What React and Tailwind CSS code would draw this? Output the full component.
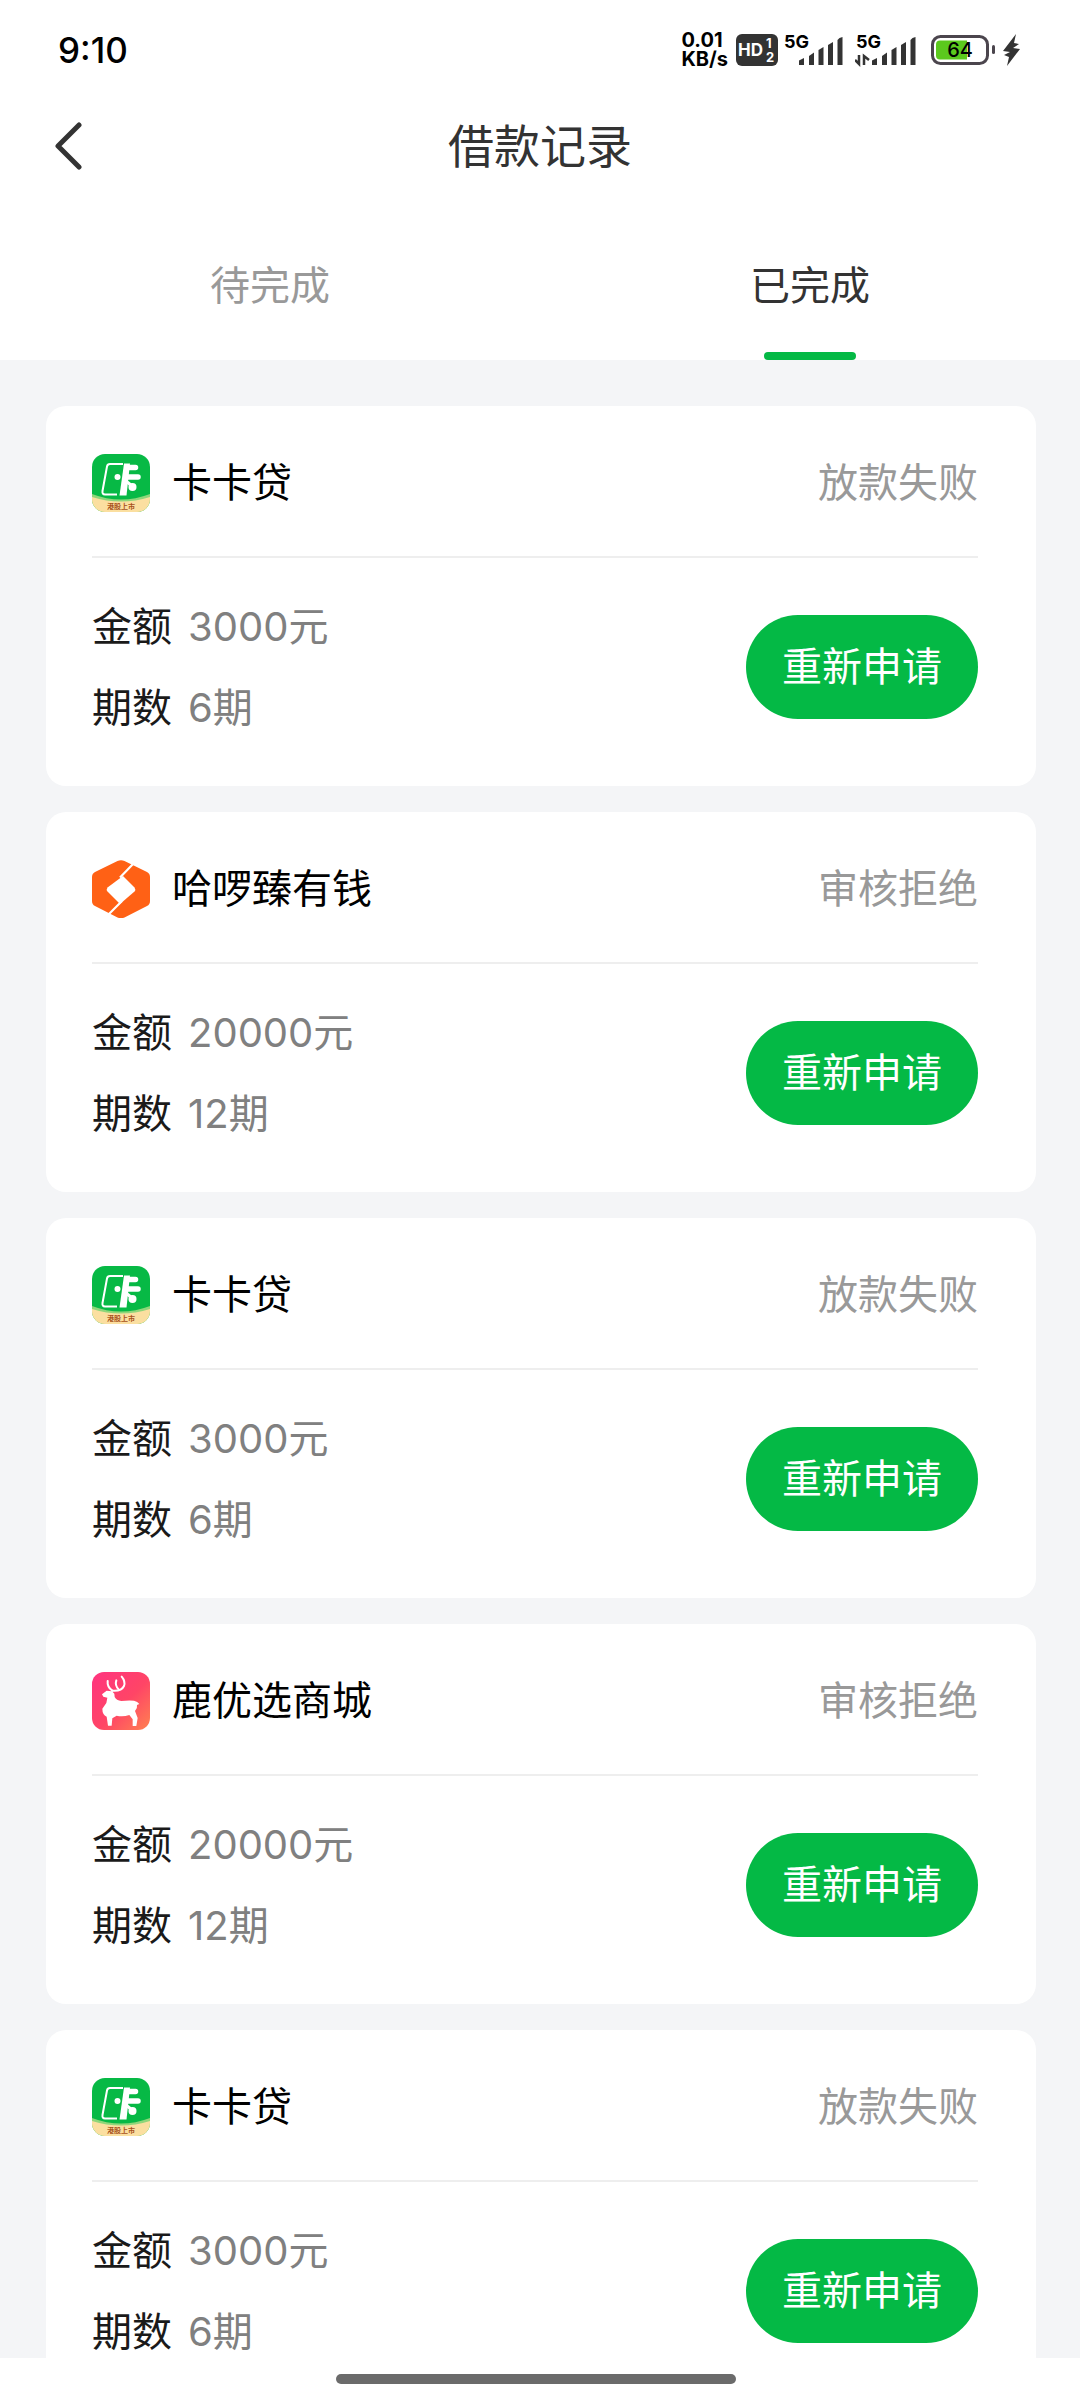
import React, { useState } from 'react';

const KakaLogo = () => (
    <svg viewBox="0 0 58 58" className="size-[58px] shrink-0" aria-hidden="true">
        <defs>
            <clipPath id="kaka-clip">
                <rect width="58" height="58" rx="13" />
            </clipPath>
        </defs>
        <g clipPath="url(#kaka-clip)">
            <rect width="58" height="58" fill="#07b945" />
            <path d="M0 40Q29 51 58 40V58H0Z" fill="#8fd67a" />
            <path d="M0 43Q29 52 58 43V58H0Z" fill="#fbdfa0" />
            <path d="M31 10H18Q15.500 10 15 12.500L10.500 37Q10 40.500 13 40.500H25" fill="none" stroke="#fff" strokeWidth="2" />
            <path d="M32 9.500H38L34.500 41.500H27.500Z" fill="#fff" />
            <path d="M36 13.500H43.500M35 23H46" stroke="#fff" strokeWidth="5.500" strokeLinecap="round" />
            <path d="M34 27L40 32" stroke="#fff" strokeWidth="3" />
            <circle cx="40.500" cy="33" r="4" fill="#fff" />
            <circle cx="25.500" cy="23" r="3" fill="#fff" />
            <text x="29" y="55" textAnchor="middle" fontSize="7" fontWeight="700" fill="#a8521a">港股上市</text>
        </g>
    </svg>
);

const HelloLogo = () => (
    <svg viewBox="0 0 58 58" className="size-[58px] shrink-0" aria-hidden="true">
        <path d="M25.500 1Q29 -.5 32.500 1L55 12Q58 13.500 58 17V41Q58 44.500 55 46L32.500 57.500Q29 59 25.500 57.500L3 46Q0 44.500 0 41V17Q0 13.500 3 12Z" fill="#ff6115" />
        <path d="M31 16L42.500 27.500Q44 29.500 42.500 31.500L28 44L15.500 31.500Q14 29.500 15.500 27.500Z" fill="#fff" />
        <path d="M42 3L28 17.500M30 41L16.500 54.500" stroke="#fff" strokeWidth="2.200" />
    </svg>
);

const DeerLogo = () => (
    <svg viewBox="0 0 174 174" className="size-[58px] shrink-0" aria-hidden="true">
        <defs>
            <linearGradient id="deer-bg" x1="0" y1="0" x2="1" y2="1">
                <stop offset="0" stopColor="#ff3480" />
                <stop offset=".55" stopColor="#ff4566" />
                <stop offset="1" stopColor="#ff8250" />
            </linearGradient>
        </defs>
        <rect width="174" height="174" rx="36" fill="url(#deer-bg)" />
        <path d="M30 67L44 56L60 58L67 65L68 75Q73 86 88 87Q110 84 126 86Q137 88 142 96L135 99Q137 109 129 117L137 138L133 162H122L122 142L112 129Q92 136 74 131L61 139L59 161H48L44 134Q31 128 31 110L43 93L46 77L34 74Z" fill="#fff" />
        <g fill="none" stroke="#fff" strokeWidth="6" strokeLinecap="round">
            <path d="M60 56Q88 59 96 42Q101 28 89 14" />
            <path d="M61 56Q45 45 47 27" />
            <path d="M80 52Q68 40 73 25" />
        </g>
    </svg>
);

const SignalBars = () => (
    <g fill="#333">
        <path d="M0 28V23.500L5 21V28Z" />
        <path d="M10 28V19L15 15.500V28Z" />
        <path d="M19.500 28V13L24.500 10V28Z" />
        <path d="M29 28V8L34 5V28Z" />
        <path d="M38.500 28V3Q40 .5 43.500 0V28Z" />
    </g>
);

const StatusBar = () => (
    <div className="flex h-[100px] items-center justify-between pr-[60px] pl-[58px] text-black">
        <span className="text-[35px] leading-none font-medium">9:10</span>
        <div className="flex items-center">
            <div className="mr-2 text-[20px] leading-[19px] font-bold">
                <div>0.01</div>
                <div>KB/s</div>
            </div>
            <svg width="42" height="32" viewBox="0 0 42 32" className="mr-1.5" fontWeight="700" fill="#fff">
                <rect width="42" height="32" rx="6" fill="#333" />
                <text x="2" y="22" fontSize="17">HD</text>
                <text x="30" y="14" fontSize="13">1</text>
                <text x="30" y="28" fontSize="13">2</text>
            </svg>
            <svg width="59" height="44" viewBox="0 -6 59 44" className="mr-3">
                <text x="0" y="14" fontSize="18" fontWeight="700">5G</text>
                <g transform="translate(15 3)"><SignalBars /></g>
            </svg>
            <svg width="61" height="44" viewBox="0 -6 61 44" className="mr-[15px]">
                <text x="1" y="14" fontSize="18" fontWeight="700">5G</text>
                <path d="M4 21V30L0 26M9 31V22L14 26" fill="none" stroke="#333" strokeWidth="2.500" />
                <g transform="translate(17 3)"><SignalBars /></g>
            </svg>
            <svg width="65" height="30" viewBox="0 0 65 30" className="mr-[7px]">
                <rect x="1.500" y="1.500" width="55" height="27" rx="8" fill="#fff" stroke="#4b454d" strokeWidth="3" />
                <path d="M9 5.500H36V24.500H9Q5 24.500 5 20.500V9.500Q5 5.500 9 5.500Z" fill="#5bc91d" />
                <text x="29" y="22" textAnchor="middle" fontSize="20" fontWeight="500">64</text>
                <rect x="61" y="10" width="3" height="9" rx="1.500" fill="#4b454d" />
            </svg>
            <svg width="17" height="32" viewBox="0 0 17 32" fill="#333">
                <path d="M13 0L0 17L7 18L1 21L6 23L4 32L17 15L10 14L16 10L11 9Z" />
            </svg>
        </div>
    </div>
);

const products = {
    kaka: { name: '卡卡贷', Logo: KakaLogo },
    hello: { name: '哈啰臻有钱', Logo: HelloLogo },
    deer: { name: '鹿优选商城', Logo: DeerLogo },
};

const records = [
    { id: 1, product: 'kaka', status: '放款失败', amount: 3000, periods: 6 },
    { id: 2, product: 'hello', status: '审核拒绝', amount: 20000, periods: 12 },
    { id: 3, product: 'kaka', status: '放款失败', amount: 3000, periods: 6 },
    { id: 4, product: 'deer', status: '审核拒绝', amount: 20000, periods: 12 },
    { id: 5, product: 'kaka', status: '放款失败', amount: 3000, periods: 6 },
];

const RecordCard = ({ record }) => {
    const { name, Logo } = products[record.product];

    return (
        <li className="shrink-0 rounded-[20px] bg-white pr-[58px] pl-[46px]">
            <div className="flex h-[152px] items-center border-b-2 border-[#eeeeee] pt-1">
                <Logo />
                <h2 className="ml-[22px] flex-1 text-[40px] leading-[56px] text-black">{name}</h2>
                <span className="text-[40px] leading-[56px] text-[#999999]">{record.status}</span>
            </div>
            <div className="flex items-center justify-between pt-7 pb-[38px]">
                <dl className="text-[40px] leading-[81px]">
                    <div className="flex gap-4">
                        <dt className="text-[#1a1a1a]">金额</dt>
                        <dd className="text-[#808080]">{record.amount}元</dd>
                    </div>
                    <div className="flex gap-4">
                        <dt className="text-[#1a1a1a]">期数</dt>
                        <dd className="text-[#808080]">{record.periods}期</dd>
                    </div>
                </dl>
                <button type="button" className="h-[104px] rounded-full bg-[#04b945] px-9 text-[40px] leading-[56px] text-white">
                    重新申请
                </button>
            </div>
        </li>
    );
};

const tabs = [
    { key: 'pending', label: '待完成' },
    { key: 'done', label: '已完成' },
];

const App = () => {
    const [activeTab, setActiveTab] = useState('done');

    return (
        <div className="flex h-screen flex-col bg-white font-['Inter','Noto_Sans_CJK_SC',sans-serif]">
            <StatusBar />

            {/* Title bar */}
            <header className="grid h-[92px] grid-cols-[1fr_auto_1fr] items-center px-[54px]">
                <button type="button" aria-label="返回" className="justify-self-start">
                    <svg width="28" height="48" viewBox="0 0 28 48" fill="none" stroke="#333" strokeWidth="5" strokeLinecap="round" strokeLinejoin="round">
                        <path d="M25 3L4 24L25 45" />
                    </svg>
                </button>
                <h1 className="text-[46px] leading-[64px] text-[#333333]">借款记录</h1>
            </header>

            {/* Tabs */}
            <div role="tablist" className="mt-5 grid h-[148px] grid-cols-2">
                {tabs.map((tab) => (
                    <button
                        key={tab.key}
                        type="button"
                        role="tab"
                        aria-selected={activeTab === tab.key}
                        onClick={() => setActiveTab(tab.key)}
                        className={`relative text-[40px] leading-[56px] ${activeTab === tab.key ? 'text-[#333333]' : 'text-[#999999]'}`}
                    >
                        {tab.label}
                        {activeTab === tab.key && (
                            <span className="absolute inset-x-0 bottom-0 mx-auto h-2 w-[92px] rounded-full bg-[#04b945]" />
                        )}
                    </button>
                ))}
            </div>

            <ul className="flex min-h-0 flex-1 flex-col gap-[26px] overflow-hidden bg-[#f4f5f7] pt-[46px] pr-11 pl-[46px]">
                {activeTab === 'done' && records.map((record) => <RecordCard key={record.id} record={record} />)}
            </ul>

            {/* Home indicator */}
            <div className="flex h-[42px] justify-center pt-4 pr-2">
                <div className="h-2.5 w-[400px] rounded-full bg-[#6b6b6b]" />
            </div>
        </div>
    );
};

export default App;
